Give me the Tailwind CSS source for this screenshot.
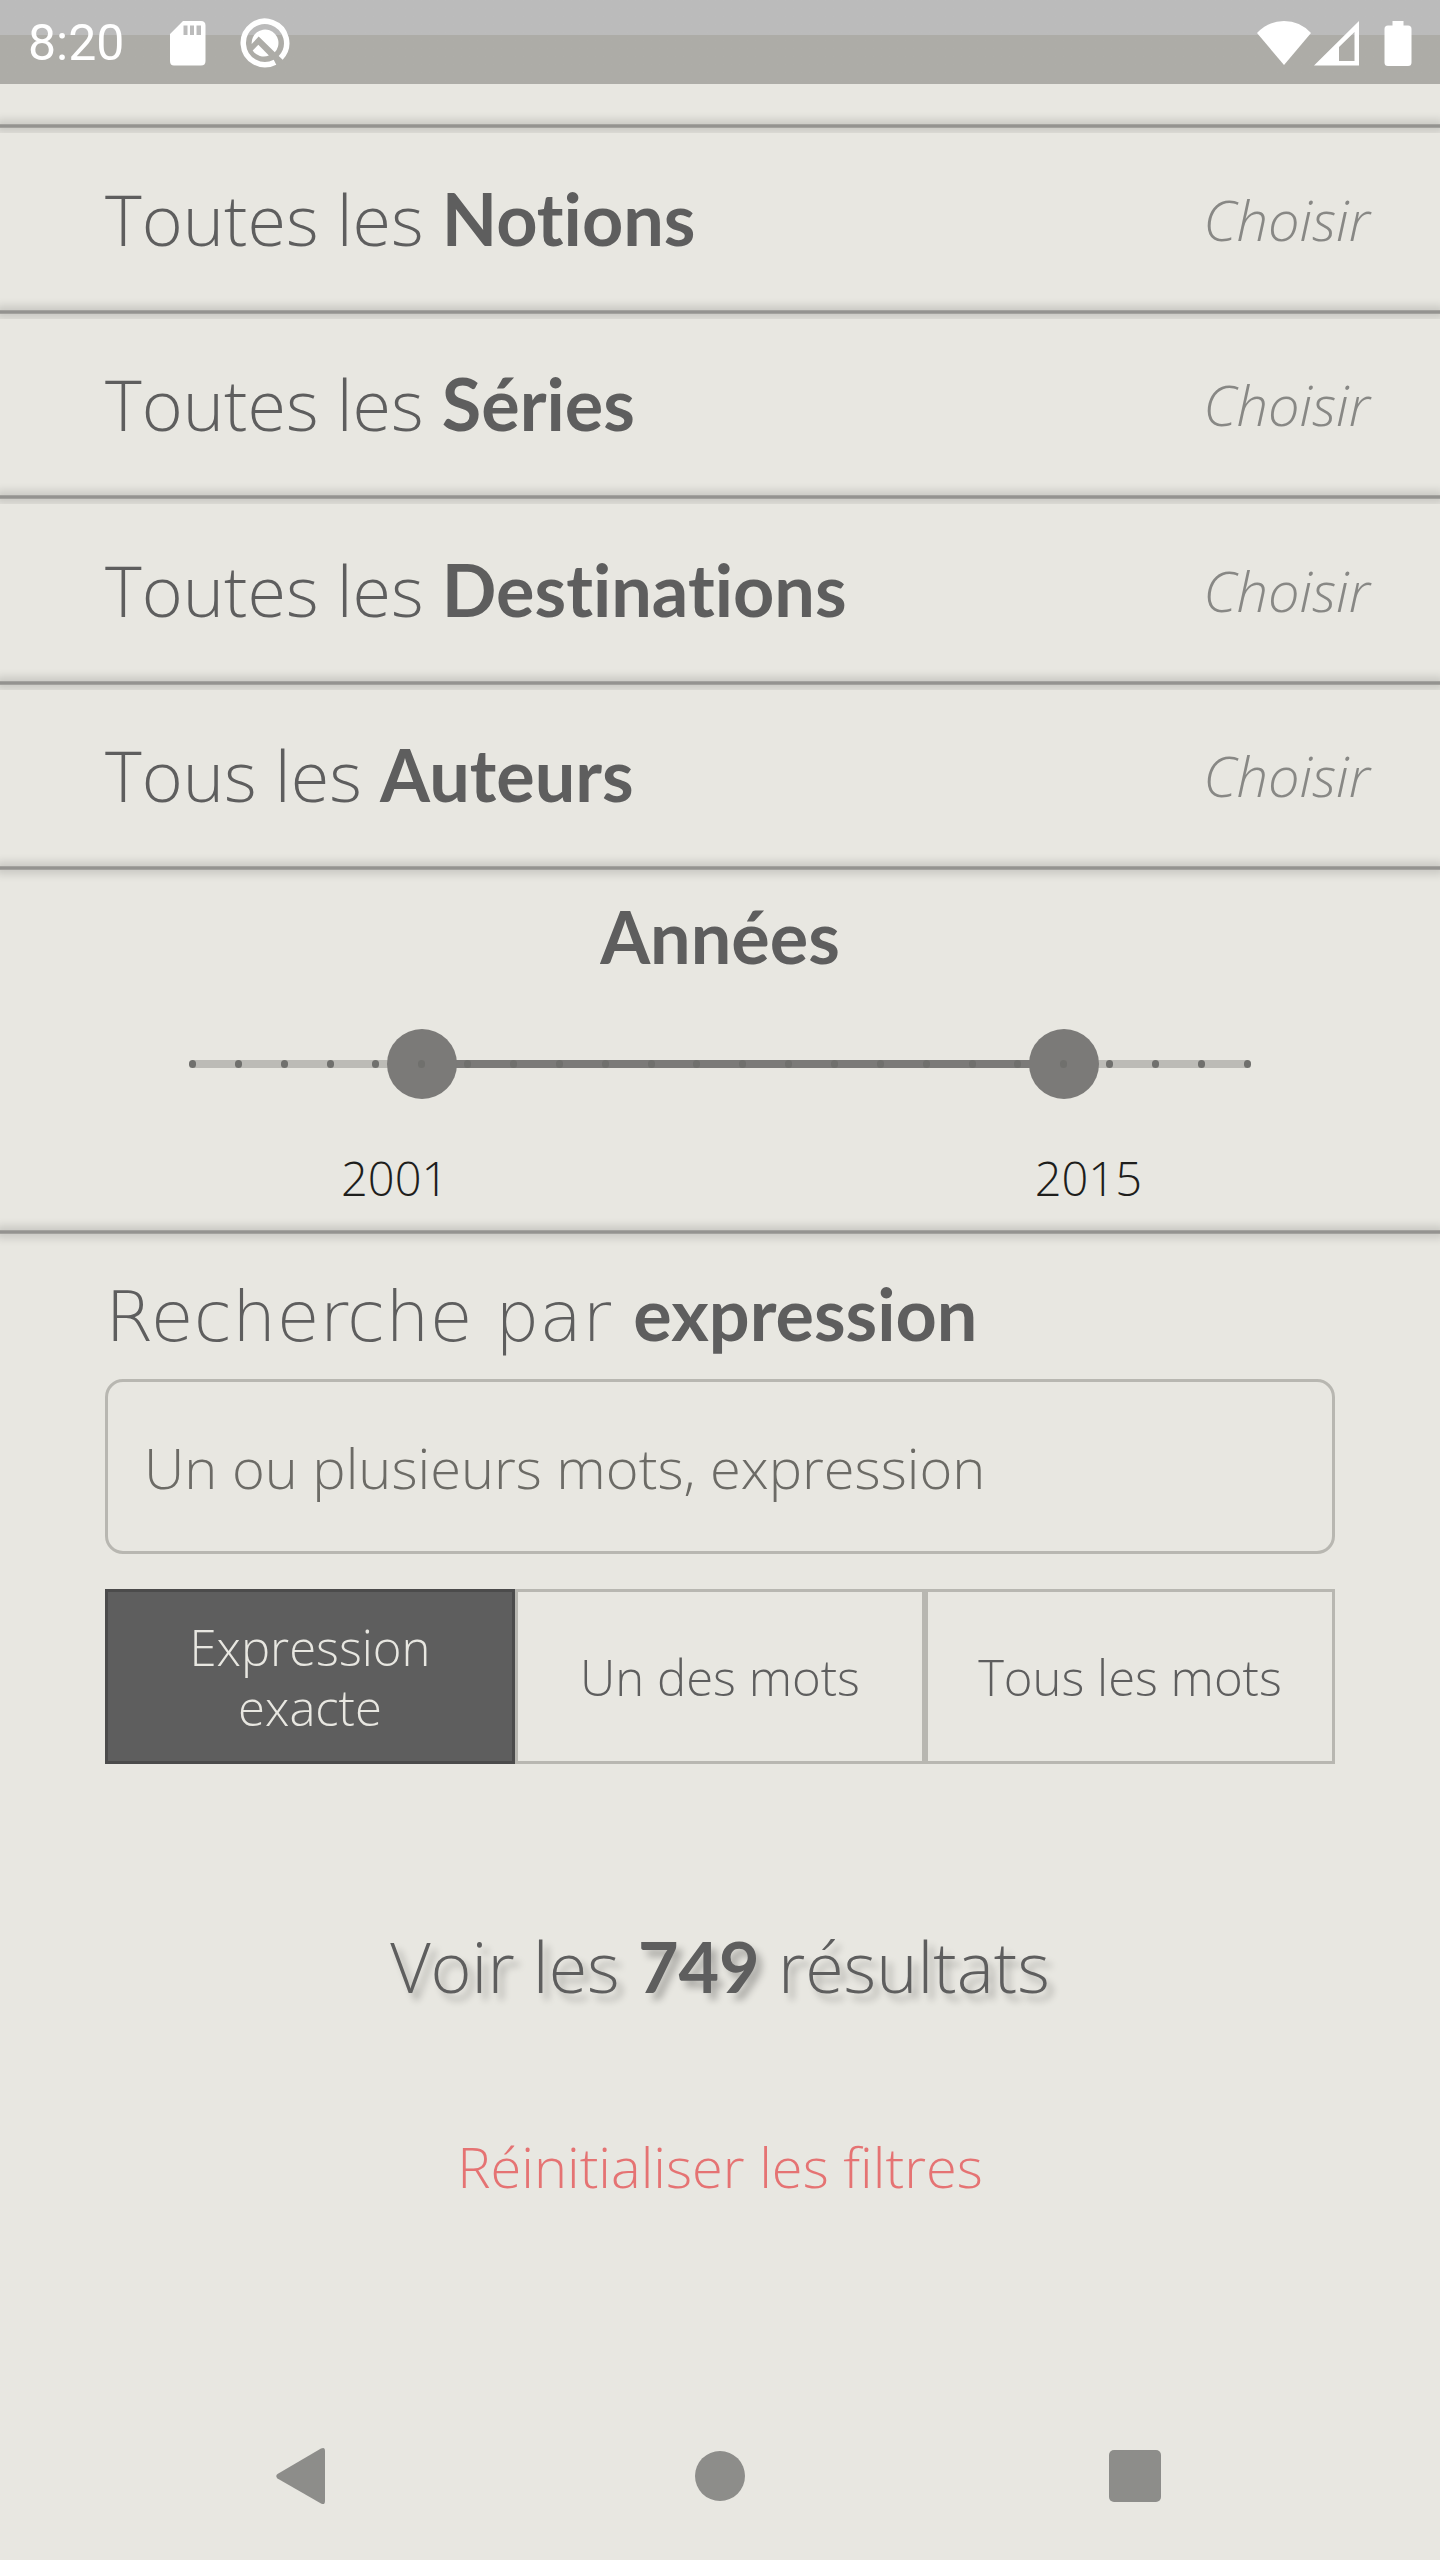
<!DOCTYPE html>
<html lang="fr">
<head>
<meta charset="utf-8">
<meta name="viewport" content="width=device-width, initial-scale=1">
<title>Filtres de recherche</title>
<script src="https://cdn.jsdelivr.net/npm/@tailwindcss/browser@4"></script>
</head>
<body class="flex min-h-screen flex-col overflow-x-hidden bg-[#e8e7e1] font-['Open_Sans',sans-serif] font-[350] text-[#5e5e5e] [font-variant-ligatures:none]">

<!-- Status bar -->
<header class="flex h-[84px] items-center bg-linear-to-b from-[#bbbbbb] from-[35px] to-[#adaca7] to-[35px] pt-[2px] pr-7 pl-7 text-white">
  <span class="font-['Roboto',sans-serif] text-[50px] leading-none font-normal">8:20</span>
  <svg class="ml-[46px] h-[50px] w-9" viewBox="0 0 36 50" fill="currentColor" aria-hidden="true"><path fill-rule="evenodd" d="M13 3H31Q35.500 3 35.500 7.500V43Q35.500 47.500 31 47.500H4Q0 47.500 0 43V16ZM13.500 7.500V17H17.500V7.500ZM20 7.500V17H24V7.500ZM26.500 7.500V17H31V7.500Z"/></svg>
  <svg class="ml-[34px] h-[50px] w-[50px]" viewBox="0 0 50 50" aria-hidden="true">
    <path d="M35 44.200A21.700 21.700 0 1 1 40.700 39.900" fill="none" stroke="white" stroke-width="5.500"/>
    <path fill="white" d="M11.700 26A13.400 13.400 0 1 1 34.800 34.200L18.700 18.500Z"/>
    <path fill="white" d="M18.300 26.800L28.900 37.500A13.400 13.400 0 0 1 12.700 32.500Z"/>
  </svg>
  <svg class="ml-auto h-[46px] w-[54px]" viewBox="0 0 54 46" fill="currentColor" aria-hidden="true"><path d="M0 13Q11 1 27 1T54 13L27 45Z"/></svg>
  <svg class="ml-[3px] h-[46px] w-[46px]" viewBox="0 0 46 46" fill="currentColor" aria-hidden="true"><path fill-rule="evenodd" d="M45 1V45.500H0ZM25 27V41H40.500V12Z"/></svg>
  <svg class="ml-6 h-[46px] w-7" viewBox="0 0 28 46" fill="currentColor" aria-hidden="true"><path d="M8.500 1H19.500V5.500H24Q27.500 5.500 27.500 9V42.500Q27.500 46 24 46H4Q.5 46 .5 42.500V9Q.5 5.500 4 5.500H8.500Z"/></svg>
</header>

<main class="flex flex-col pt-10">
  <!-- Filter rows -->
  <ul class="grid h-[742px] grid-rows-4">
    <li class="flex flex-col">
      <div class="h-1 border-y border-[#a3a29e] bg-[#949390] shadow-[0_0_8px_4px_rgba(0,0,0,0.14)]"></div>
      <button class="mt-[5px] flex flex-1 items-center justify-between bg-[#e8e7e1] pr-[70px] pb-[5px] pl-[105px]">
        <span class="text-[70px] leading-[84px]">Toutes les <b class="font-['Lato',sans-serif] text-[72px] leading-none font-bold">Notions</b></span>
        <i class="text-[56px] leading-[68px] text-[#888885]">Choisir</i>
      </button>
    </li>
    <li class="flex flex-col">
      <div class="h-1 border-y border-[#a3a29e] bg-[#949390] shadow-[0_0_8px_4px_rgba(0,0,0,0.14)]"></div>
      <button class="mt-[5px] flex flex-1 items-center justify-between bg-[#e8e7e1] pr-[70px] pb-[5px] pl-[105px]">
        <span class="text-[70px] leading-[84px]">Toutes les <b class="font-['Lato',sans-serif] text-[72px] leading-none font-bold">Séries</b></span>
        <i class="text-[56px] leading-[68px] text-[#888885]">Choisir</i>
      </button>
    </li>
    <li class="flex flex-col">
      <div class="h-1 border-y border-[#a3a29e] bg-[#949390] shadow-[0_0_8px_4px_rgba(0,0,0,0.14)]"></div>
      <button class="mt-[5px] flex flex-1 items-center justify-between bg-[#e8e7e1] pr-[70px] pb-[5px] pl-[105px]">
        <span class="text-[70px] leading-[84px]">Toutes les <b class="font-['Lato',sans-serif] text-[72px] leading-none font-bold">Destinations</b></span>
        <i class="text-[56px] leading-[68px] text-[#888885]">Choisir</i>
      </button>
    </li>
    <li class="flex flex-col">
      <div class="h-1 border-y border-[#a3a29e] bg-[#949390] shadow-[0_0_8px_4px_rgba(0,0,0,0.14)]"></div>
      <button class="mt-[5px] flex flex-1 items-center justify-between bg-[#e8e7e1] pr-[70px] pb-[5px] pl-[105px]">
        <span class="text-[70px] leading-[84px]">Tous les <b class="font-['Lato',sans-serif] text-[72px] leading-none font-bold">Auteurs</b></span>
        <i class="text-[56px] leading-[68px] text-[#888885]">Choisir</i>
      </button>
    </li>
  </ul>

  <!-- Year range -->
  <section class="flex flex-col">
    <div class="h-1 border-y border-[#a3a29e] bg-[#949390] shadow-[0_0_8px_4px_rgba(0,0,0,0.14)]"></div>
    <h2 class="pt-6 text-center font-['Lato',sans-serif] text-[72px] leading-[84px] font-bold">Années</h2>
    <div class="relative mx-[157px] mt-[51px] h-[70px]">
      <div class="absolute inset-x-[35px] top-[31px] h-2 bg-[#bcbbb6]">
        <div class="absolute inset-y-0 bg-[#7b7a78]" style="left:21.74%;right:17.39%"></div>
      </div>
      <input type="range" min="1996" max="2019" value="2001" aria-label="Année de début" class="pointer-events-none absolute inset-0 h-full w-full appearance-none bg-transparent [&::-webkit-slider-thumb]:pointer-events-auto [&::-webkit-slider-thumb]:size-[70px] [&::-webkit-slider-thumb]:appearance-none [&::-webkit-slider-thumb]:rounded-full [&::-webkit-slider-thumb]:bg-[#7b7a78]">
      <input type="range" min="1996" max="2019" value="2015" aria-label="Année de fin" class="pointer-events-none absolute inset-0 h-full w-full appearance-none bg-transparent [&::-webkit-slider-thumb]:pointer-events-auto [&::-webkit-slider-thumb]:size-[70px] [&::-webkit-slider-thumb]:appearance-none [&::-webkit-slider-thumb]:rounded-full [&::-webkit-slider-thumb]:bg-[#7b7a78]">
      <div id="ticks" class="pointer-events-none absolute inset-x-8 top-[31px] flex justify-between"></div>
    </div>
    <div class="mt-[49px] flex justify-between pr-[298px] pb-[22px] pl-[341px] text-[47px] leading-[60px] text-[#1e1e1c]">
      <output>2001</output>
      <output>2015</output>
    </div>
  </section>

  <!-- Text search -->
  <section class="flex flex-col">
    <div class="h-1 border-y border-[#a3a29e] bg-[#949390] shadow-[0_0_8px_4px_rgba(0,0,0,0.14)]"></div>
    <div class="px-[105px] pt-[41px]">
      <label for="q" class="block h-[84px] font-['DejaVu_Sans',sans-serif] text-[70px] leading-[84px] font-extralight">Recherche par <b class="font-['Lato',sans-serif] text-[72px] leading-none font-bold">expression</b></label>
      <input id="q" type="text" placeholder="Un ou plusieurs mots, expression" class="mt-5 block h-[175px] w-full rounded-[18px] border-[3px] border-[#b8b7b1] bg-transparent px-9 text-[56px] placeholder:text-[#6c6b66]">
      <div role="group" aria-label="Mode de recherche" class="mt-[35px] grid h-[175px] grid-cols-3 text-[49px] leading-[60px]">
        <button aria-pressed="true" class="border-[3px] border-[#4b4b4b] bg-[#5e5e5e] px-16 text-[#e8e7e1]">Expression exacte</button>
        <button aria-pressed="false" class="border-[3px] border-[#b8b7b1]">Un des mots</button>
        <button aria-pressed="false" class="border-[3px] border-[#b8b7b1]">Tous les mots</button>
      </div>
    </div>
  </section>

  <button class="mt-40 self-center text-[70px] leading-[84px] [text-shadow:6px_7px_7px_rgba(0,0,0,0.25)]">Voir les <b class="font-['Lato',sans-serif] font-bold">749</b> résultats</button>
  <button class="mt-[124px] self-center text-[56px] leading-[68px] text-[#e57373]">Réinitialiser les filtres</button>
</main>

<!-- System navigation -->
<nav class="mt-auto flex h-[168px] items-center justify-between px-[272px] text-[#8d8d8a]">
  <button aria-label="Retour"><svg class="size-[60px]" viewBox="0 0 60 60" fill="currentColor"><path d="M5.500 28L49 2.500Q53 .500 53 5V55Q53 59.500 49 57.500L5.500 32.500Q3 30 5.500 28Z"/></svg></button>
  <button aria-label="Accueil"><svg class="size-[60px]" viewBox="0 0 60 60" fill="currentColor"><circle cx="30" cy="30" r="25"/></svg></button>
  <button aria-label="Applications récentes"><svg class="size-[60px]" viewBox="0 0 60 60" fill="currentColor"><rect x="1" y="4" width="52" height="52" rx="5"/></svg></button>
</nav>

<script>
// One tick per year, 1996 to 2019
const ticks = document.getElementById('ticks');
for (let year = 1996; year <= 2019; year++) {
  const dot = document.createElement('span');
  dot.className = 'h-2 w-[7px] rounded-full bg-[#70706d]';
  ticks.append(dot);
}
</script>
</body>
</html>
